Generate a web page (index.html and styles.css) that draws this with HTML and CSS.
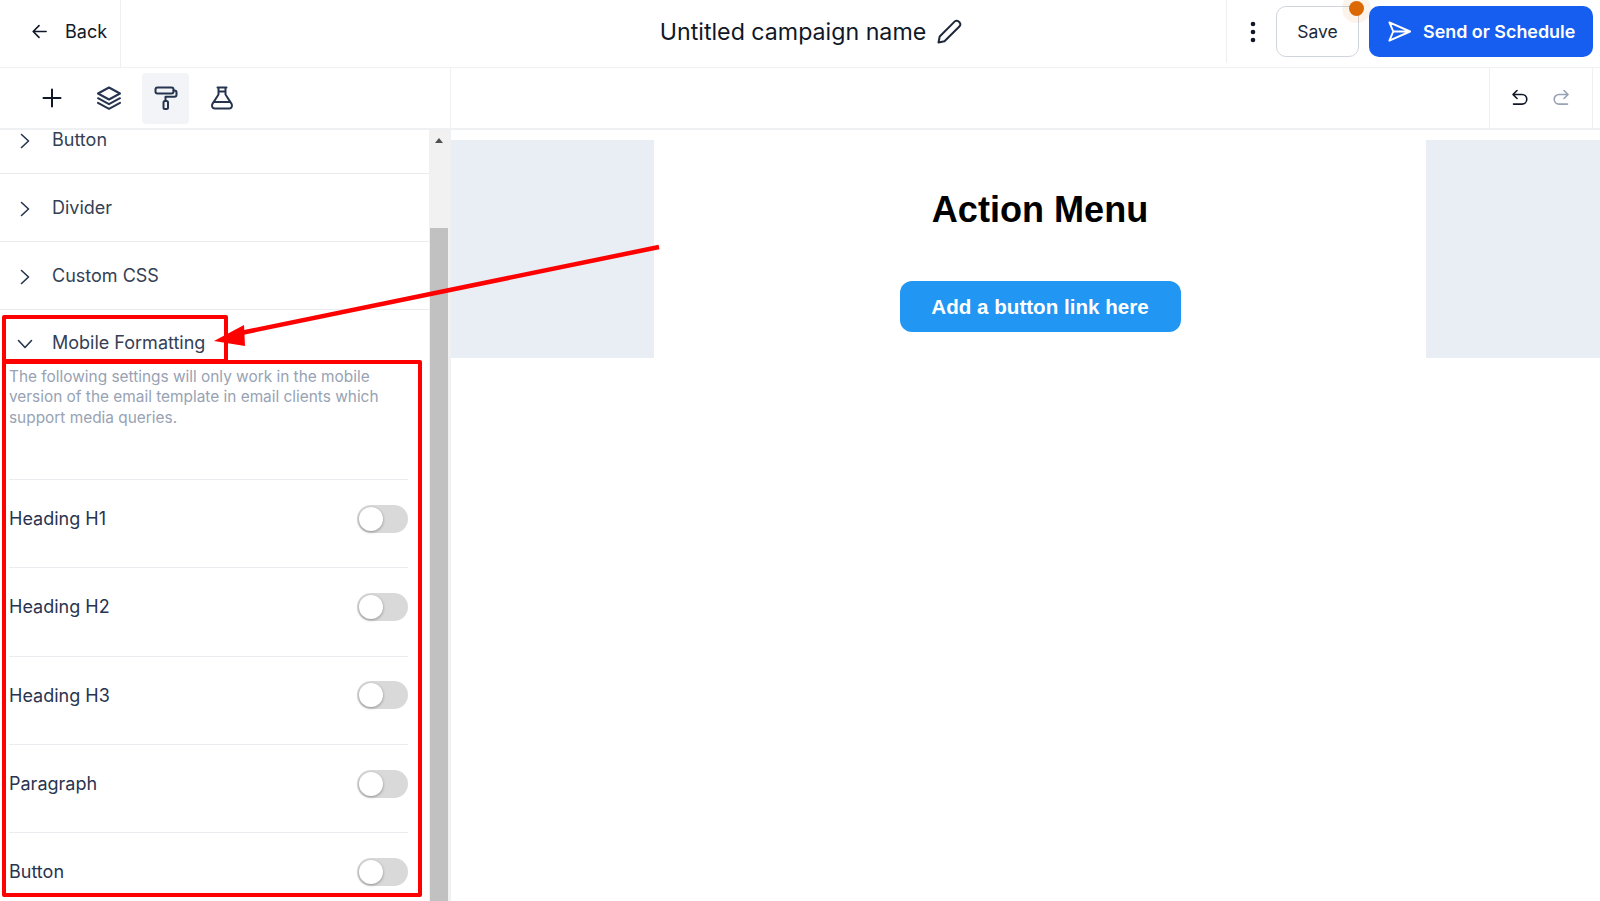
FILE: index.html
```html
<!DOCTYPE html>
<html lang="en">
<head>
<meta charset="utf-8">
<title>Untitled campaign name</title>
<link rel="stylesheet" href="styles.css">
</head>
<body>
<div class="app">
  <header class="topbar">
    <a class="back">
      <svg class="ico-back" viewBox="0 0 18 18"><path d="M16 9H2.500M8.500 2.800 2.300 9l6.200 6.200"/></svg>
      <span>Back</span>
    </a>
    <div class="title">
      <span>Untitled campaign name</span>
      <svg class="ico-pencil" viewBox="0 0 26 26"><path d="M2.500 23.500l1.200-6L18.800 2.400a2.600 2.600 0 0 1 3.700 0l1.100 1.100a2.600 2.600 0 0 1 0 3.700L8.500 22.300z"/></svg>
    </div>
    <div class="actions">
      <svg class="ico-kebab" viewBox="0 0 6 22"><circle cx="3" cy="3" r="2.300"/><circle cx="3" cy="11" r="2.300"/><circle cx="3" cy="19" r="2.300"/></svg>
      <button class="btn-save">Save<i class="dot"></i></button>
      <button class="btn-send">
        <svg class="ico-send" viewBox="0 0 26 26"><path d="M2.500 3.500 24 13 2.500 22.500 6.500 13zM6.500 13H24"/></svg>
        <span>Send or Schedule</span>
      </button>
    </div>
  </header>

  <div class="toolbar">
    <div class="tools">
      <span class="tool"><svg viewBox="0 0 24 24"><path d="M12 3.500v17M3.500 12h17" class="s-dark"/></svg></span>
      <span class="tool"><svg viewBox="0 0 24 24"><path d="M12 1.500 1 7.500l11 6 11-6zM1 12.200l11 6 11-6M1 16.800l11 6 11-6"/></svg></span>
      <span class="tool active"><svg viewBox="0 0 24 24"><rect x="1.500" y="1.500" width="18" height="6" rx="2"/><path d="M19.500 4.500h1a2 2 0 0 1 2 2v2.300a2 2 0 0 1-2 2h-9v4.200"/><rect x="9.500" y="15" width="4.500" height="8" rx="1.500"/></svg></span>
      <span class="tool"><svg viewBox="0 0 24 24"><path d="M7.500 1.500h9M8.500 1.500v7L2.600 17.600c-1.300 2.200-.4 4.900 2.200 4.900h14.400c2.600 0 3.500-2.700 2.200-4.900L15.500 8.500v-7M8.500 5.500h7M4.500 16h15"/></svg></span>
    </div>
    <div class="history">
      <div class="hist-group">
        <svg class="hist" viewBox="0 0 18 18"><path d="M6 1.500 2 5.500l4 4M2.500 5.500H11a4.800 4.800 0 0 1 0 9.600H2.500"/></svg>
        <svg class="hist off" viewBox="0 0 18 18"><path d="M12 1.500l4 4-4 4M15.500 5.500H7a4.800 4.800 0 0 0 0 9.600h8.500"/></svg>
      </div>
    </div>
  </div>

  <main class="workspace">
    <aside class="sidebar">
      <div class="panel">
        <div class="section">
          <svg class="chev" viewBox="0 0 12 16"><path d="M2.500 1.500 9.500 8l-7 6.500"/></svg><span>Button</span>
        </div>
        <div class="section">
          <svg class="chev" viewBox="0 0 12 16"><path d="M2.500 1.500 9.500 8l-7 6.500"/></svg><span>Divider</span>
        </div>
        <div class="section">
          <svg class="chev" viewBox="0 0 12 16"><path d="M2.500 1.500 9.500 8l-7 6.500"/></svg><span>Custom CSS</span>
        </div>
        <div class="section open">
          <svg class="chev down" viewBox="0 0 16 12"><path d="M1.500 2.500 8 9.500l6.500-7"/></svg><span>Mobile Formatting</span>
        </div>
        <div class="mobile">
          <p class="hint">The following settings will only work in the mobile version of the email template in email clients which support media queries.</p>
          <div class="row"><span>Heading H1</span><i class="toggle"></i></div>
          <div class="row"><span>Heading H2</span><i class="toggle"></i></div>
          <div class="row"><span>Heading H3</span><i class="toggle"></i></div>
          <div class="row"><span>Paragraph</span><i class="toggle"></i></div>
          <div class="row"><span>Button</span><i class="toggle"></i></div>
        </div>
      </div>
      <div class="scrollbar">
        <i class="arrow"></i>
        <i class="thumb"></i>
      </div>
    </aside>
    <section class="canvas">
      <div class="email">
        <div class="gutter left"></div>
        <div class="content">
          <h1>Action Menu</h1>
          <a class="cta">Add a button link here</a>
        </div>
        <div class="gutter right"></div>
      </div>
    </section>
  </main>
</div>

<svg class="annotations" viewBox="0 0 1600 901">
  <rect x="4" y="317" width="222" height="44"/>
  <rect x="4" y="362" width="416" height="533"/>
  <path class="shaft" d="M659 247 236 334"/>
  <path class="head" d="M214 341 244 325 245 346z"/>
</svg>
</body>
</html>
```
FILE: styles.css
```css
* { box-sizing: border-box; }
html, body { margin: 0; height: 901px; overflow: hidden; background: #fff; }
body { font-family: Inter, "Liberation Sans", sans-serif; color: #101828; position: relative; }
.app { display: flex; flex-direction: column; height: 901px; }
svg { display: block; fill: none; stroke-linecap: round; stroke-linejoin: round; }

/* top bar */
.topbar { display: flex; align-items: center; height: 68px; border-bottom: 1px solid #f0f1f3; flex: none; }
.back { width: 121px; height: 67px; border-right: 1px solid #eceef1; display: flex; align-items: center; padding: 0 0 4px 31px; gap: 17px; font-size: 18px; color: #101828; }
.ico-back { width: 17px; height: 17px; stroke: #101828; stroke-width: 1.700; }
.title { flex: 1; display: flex; align-items: center; justify-content: center; gap: 10px; font-size: 23.200px; color: #101828; padding: 0 0 4px 275px; }
.ico-pencil { width: 26px; height: 26px; stroke: #1d2939; stroke-width: 2; }
.actions { width: 374px; height: 63px; align-self: flex-start; border-left: 1px solid #eceef1; display: flex; align-items: center; padding-left: 23px; }
.ico-kebab { width: 6px; height: 22px; fill: #101828; margin-right: 20px; }
.btn-save { position: relative; width: 83px; height: 51px; border: 1px solid #d0d5dd; border-radius: 10px; background: #fff; font: 17.500px Inter, sans-serif; color: #1d2939; padding: 0; margin-right: 10px; }
.dot { position: absolute; right: -6px; top: -6px; width: 15px; height: 15px; background: #dc6803; border-radius: 50%; box-shadow: 0 0 0 7px rgba(220, 104, 3, .08); }
.btn-send { width: 224px; height: 51px; border: 0; border-radius: 10px; background: #155eef; color: #fff; font: 600 17.900px Inter, sans-serif; display: flex; align-items: center; gap: 11px; padding: 0 0 0 18px; }
.ico-send { width: 25px; height: 25px; stroke: #fff; stroke-width: 2; flex: none; }

/* toolbar */
.toolbar { display: flex; height: 62px; border-bottom: 2px solid #eff0f2; flex: none; }
.tools { width: 451px; border-right: 1px solid #eef0f2; display: flex; align-items: center; gap: 10px; padding-left: 28px; }
.tool { width: 47px; height: 51px; border-radius: 4px; display: flex; align-items: center; justify-content: center; }
.tool svg { width: 24px; height: 24px; stroke: #26344f; stroke-width: 2; }
.tool:last-child svg { margin-right: 2px; }
.tool .s-dark { stroke: #101828; }
.tool.active { background: #f2f4f7; }
.history { flex: 1; display: flex; justify-content: flex-end; padding-right: 7px; }
.hist-group { width: 104px; border-left: 1px solid #eef0f2; border-right: 1px solid #eef0f2; display: flex; align-items: center; gap: 23px; padding-left: 21px; }
.hist { width: 18px; height: 18px; stroke: #101828; stroke-width: 1.600; }
.hist.off { stroke: #98a2b3; }

/* workspace */
.workspace { flex: 1; display: flex; min-height: 0; }
.sidebar { width: 451px; flex: none; display: flex; border-right: 1px solid #eef0f2; overflow: hidden; }
.panel { width: 429px; flex: none; margin-top: -24px; }
.section { height: 68px; display: flex; align-items: center; padding-left: 19px; gap: 21px; border-bottom: 1px solid #eaecf0; font-size: 18px; color: #344054; }
.section.open { border-bottom: 0; height: 54px; padding-top: 10px; }
.chev { width: 12px; height: 16px; stroke: #26344f; stroke-width: 1.600; flex: none; margin-top: 2px; }
.chev.down { width: 16px; height: 12px; margin-left: -2px; margin-right: -2px; margin-top: 4px; }
.mobile { padding: 0 21px 0 9px; }
.hint { margin: 0; height: 115px; font-size: 15.400px; line-height: 20.500px; color: #98a2b3; padding-top: 2.500px; }
.row { height: 88.300px; display: flex; align-items: center; justify-content: space-between; border-top: 1px solid #eaecf0; padding-bottom: 10px; font-size: 18px; color: #283450; }
.toggle { width: 51px; height: 28px; border-radius: 14px; background: #d9d9d9; position: relative; }
.toggle::after { content: ""; position: absolute; left: 2px; top: 2px; width: 24px; height: 24px; border-radius: 50%; background: #fff; box-shadow: 0 1px 3px rgba(0, 0, 0, .35); }
.scrollbar { width: 21px; background: #f1f1f1; display: flex; flex-direction: column; align-items: flex-start; padding-left: 1px; }
.arrow { margin: 8px 0 0 5px; width: 0; height: 0; border: 4.500px solid transparent; border-top: 0; border-bottom: 5px solid #505050; }
.thumb { width: 18px; margin-top: 85px; flex: 1; background: #c1c1c1; }

/* canvas */
.canvas { flex: 1; padding-top: 10px; min-width: 0; }
.email { display: flex; height: 218px; }
.gutter { background: #e9eef5; }
.gutter.left { width: 203px; }
.gutter.right { flex: 1; }
.content { width: 772px; display: flex; flex-direction: column; align-items: center; font-family: "Liberation Sans", Arial, sans-serif; }
.content h1 { margin: 46px 0 0; font-size: 36.100px; line-height: 48px; font-weight: 700; color: #000; }
.cta { margin-top: 47px; width: 281px; height: 51px; border-radius: 12px; background: #2196f3; color: #fff; font-size: 20.600px; font-weight: 700; display: flex; align-items: center; justify-content: center; }

/* annotations */
.annotations { position: absolute; left: 0; top: 0; width: 1600px; height: 901px; pointer-events: none; }
.annotations rect { fill: none; stroke: #ff0000; stroke-width: 4; stroke-linecap: butt; }
.annotations .shaft { stroke: #ff0000; stroke-width: 4.500; stroke-linecap: butt; }
.annotations .head { fill: #ff0000; }
```
